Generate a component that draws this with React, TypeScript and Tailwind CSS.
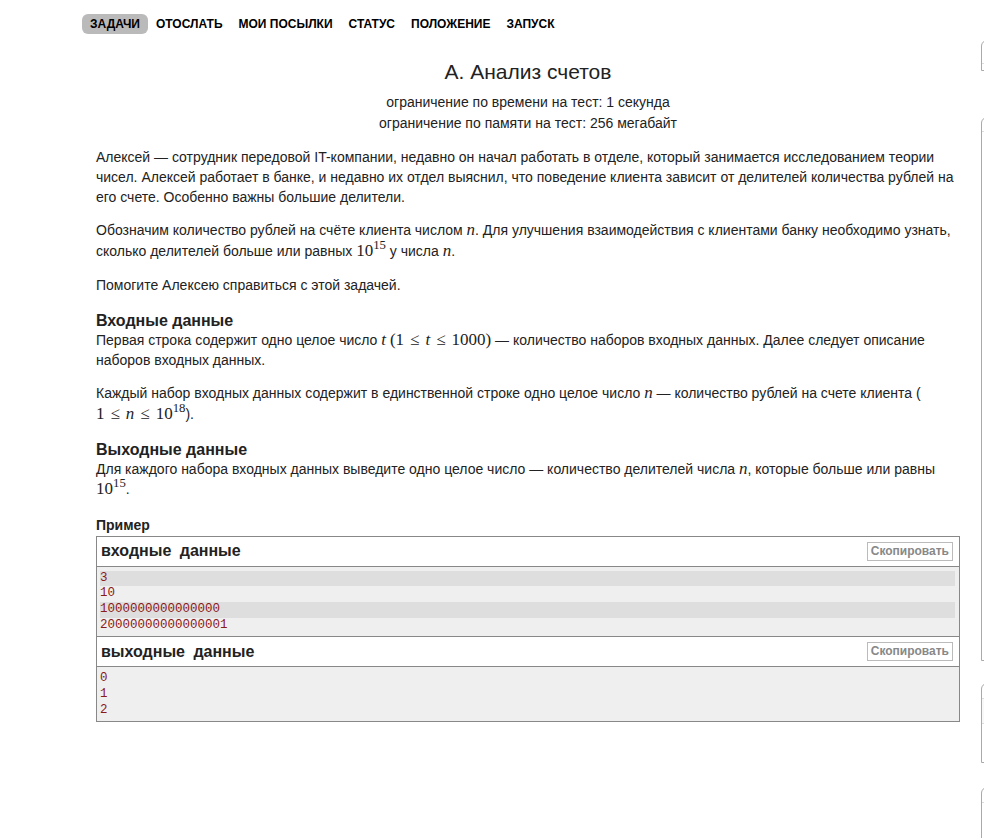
import type { ReactNode } from 'react';

const NAV = ['ЗАДАЧИ', 'ОТОСЛАТЬ', 'МОИ ПОСЫЛКИ', 'СТАТУС', 'ПОЛОЖЕНИЕ', 'ЗАПУСК'];

const SAMPLE_IN = ['3', '10', '1000000000000000', '20000000000000001'];
const SAMPLE_OUT = ['0', '1', '2'];

function M({ children }: { children: ReactNode }) {
  return (
    <span className="whitespace-nowrap font-['Liberation_Serif',serif] text-[17px] leading-none">
      {children}
    </span>
  );
}

function V({ children }: { children: ReactNode }) {
  return <span className="italic">{children}</span>;
}

function Le() {
  return <span className="mx-[6px]">≤</span>;
}

function SampleBlock({ title, lines, striped }: { title: string; lines: string[]; striped?: boolean }) {
  return (
    <div>
      <div className="flex h-[30px] items-center justify-between border-b border-[#888] pl-[4px] pr-[6px]">
        <span className="text-[16px] font-bold text-[#222] [word-spacing:4px]">{title}</span>
        <span className="border border-[#bbb] bg-white px-[3px] text-[12px] font-bold leading-[17px] text-[#888]">
          Скопировать
        </span>
      </div>
      <div className="bg-[#efefef] pb-[3px] pl-[3px] pr-[4px] pt-[4px] font-['Liberation_Mono',monospace] text-[12.5px] leading-[15.7px] text-[#8b1a1a]">
        {lines.map((l, i) => (
          <div key={i} className={striped && i % 2 === 0 ? 'bg-[#dedede]' : ''}>
            {l}
          </div>
        ))}
      </div>
    </div>
  );
}

export default function App() {
  return (
    <div className="h-[838px] w-[984px] overflow-hidden bg-white font-['Liberation_Sans',Arial,sans-serif] text-[#222]">
      <nav className="flex pl-[82px] pt-[14px]">
        {NAV.map((n, i) => (
          <span
            key={n}
            className={
              'rounded-[6px] px-[8px] text-[12px] font-bold leading-[20px] text-black ' +
              (i === 0 ? 'bg-[#bababa]' : '')
            }
          >
            {n}
          </span>
        ))}
      </nav>

      <div className="flex pl-[96px]">
        <main className="w-[864px] shrink-0">
          <h1 className="mt-[23px] text-center text-[21px] leading-[30px]">A. Анализ счетов</h1>
          <div className="mt-[5px] text-center text-[14px] leading-[21px]">
            <div>ограничение по времени на тест: 1 секунда</div>
            <div>ограничение по памяти на тест: 256 мегабайт</div>
          </div>

          <div className="mr-[-8px] text-[14px]">
            <p className="mt-[12.5px] leading-5">
              Алексей — сотрудник передовой IT-компании, недавно он начал работать в отделе, который занимается
              исследованием теории чисел. Алексей работает в банке, и недавно их отдел выяснил, что поведение клиента
              зависит от делителей количества рублей на его счете. Особенно важны большие делители.
            </p>
            <p className="mt-[13px] leading-[21px]">
              Обозначим количество рублей на счёте клиента числом{' '}
              <M>
                <V>n</V>
              </M>
              . Для улучшения взаимодействия с клиентами банку необходимо узнать, сколько делителей больше или
              равных{' '}
              <M>
                10<sup>15</sup>
              </M>{' '}
              у числа{' '}
              <M>
                <V>n</V>
              </M>
              .
            </p>
            <p className="mt-[13px] leading-5">Помогите Алексею справиться с этой задачей.</p>

            <h2 className="mt-[16px] text-[16px] font-bold leading-[19px]">Входные данные</h2>
            <p className="leading-5">
              Первая строка содержит одно целое число{' '}
              <M>
                <V>t</V>
              </M>{' '}
              <M>
                (1<Le />
                <V>t</V>
                <Le />
                1000)
              </M>{' '}
              — количество наборов входных данных. Далее следует описание наборов входных данных.
            </p>
            <p className="mt-[13px] leading-[21px]">
              Каждый набор входных данных содержит в единственной строке одно целое число{' '}
              <M>
                <V>n</V>
              </M>{' '}
              — количество рублей на счете клиента (
              <br />
              <M>
                1<Le />
                <V>n</V>
                <Le />
                10<sup>18</sup>
              </M>
              ).
            </p>

            <h2 className="mt-[15px] text-[16px] font-bold leading-[19px]">Выходные данные</h2>
            <p className="leading-5">
              Для каждого набора входных данных выведите одно целое число — количество делителей числа{' '}
              <M>
                <V>n</V>
              </M>
              , которые больше или равны{' '}
              <M>
                10<sup>15</sup>
              </M>
              .
            </p>

            <div className="mt-[16px] text-[14px] font-bold leading-5">Пример</div>
          </div>

          <div className="mt-[1px] border border-[#888]">
            <SampleBlock title="входные данные" lines={SAMPLE_IN} striped />
            <div className="border-t border-[#888]">
              <SampleBlock title="выходные данные" lines={SAMPLE_OUT} />
            </div>
          </div>
        </main>

        <aside className="ml-[21px] w-[300px] shrink-0">
          <div className="mt-[6px] h-[31px] rounded-tl-[6px] border border-[#aaa]">
            <div className="h-[23px] border-b border-[#ddd]" />
          </div>
          <div className="mt-[46px] h-[544px] rounded-tl-[6px] border border-[#aaa]">
            <div className="h-[14px] border-b border-[#ddd]" />
          </div>
          <div className="mt-[22px] h-[80px] rounded-tl-[6px] border border-[#aaa]">
            <div className="h-[15px] border-b border-[#ddd]" />
            <div className="h-[25px] border-b border-[#ddd] bg-[#f8f8f8]" />
          </div>
          <div className="mt-[24px] h-[80px] rounded-tl-[6px] border border-[#aaa]">
            <div className="h-[15px] border-b border-[#ddd]" />
          </div>
        </aside>
      </div>
    </div>
  );
}
